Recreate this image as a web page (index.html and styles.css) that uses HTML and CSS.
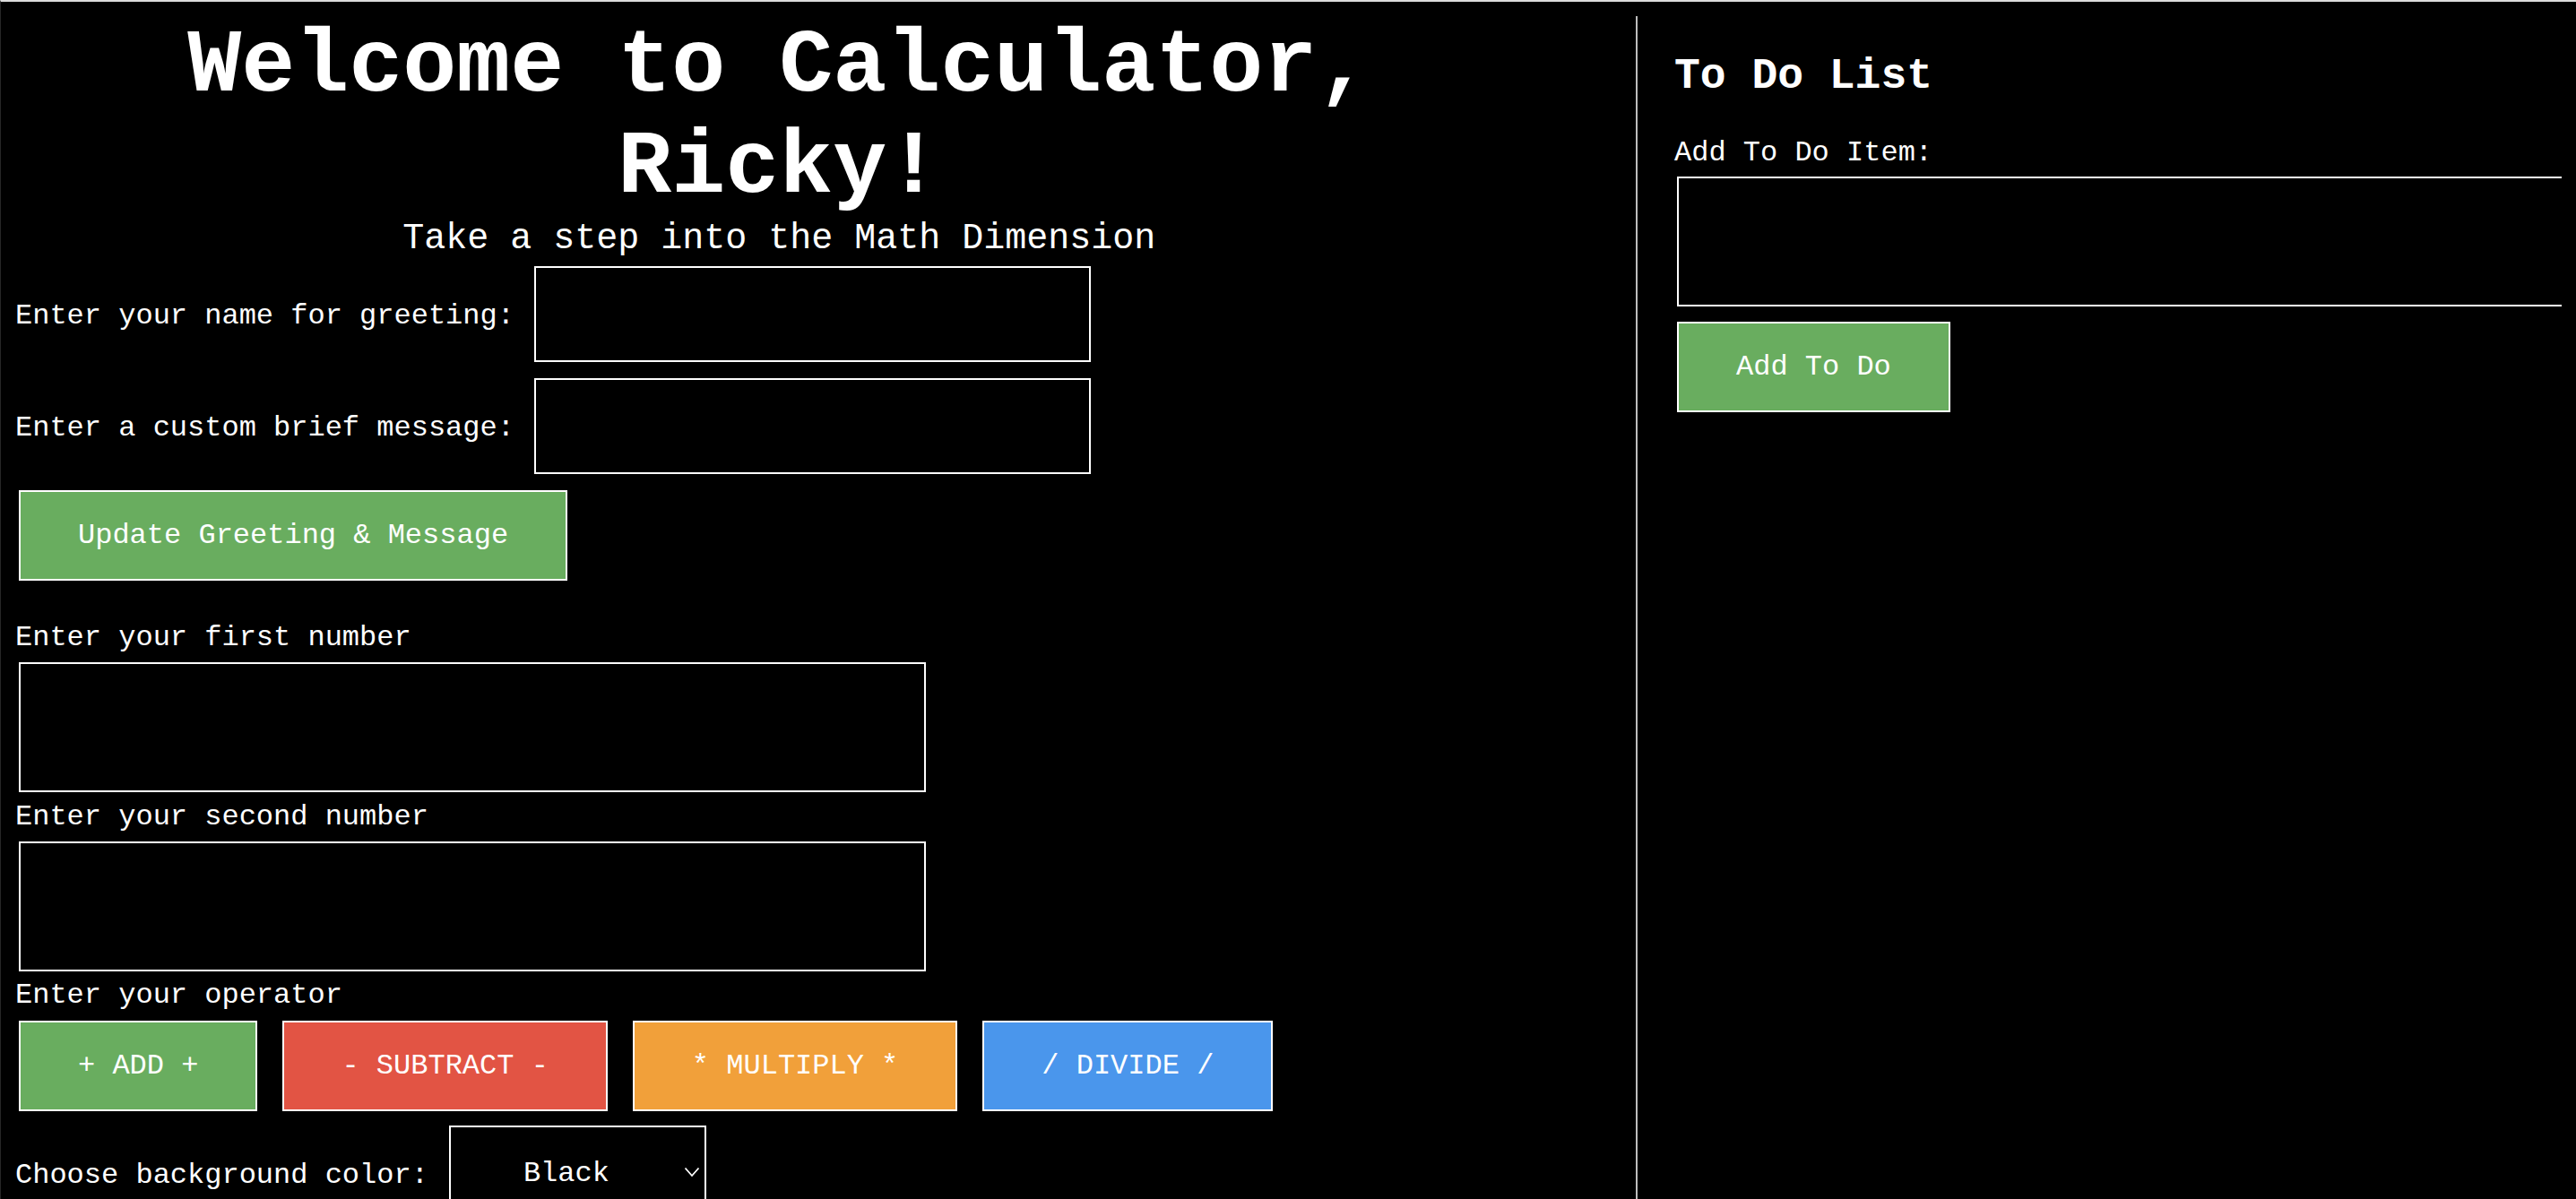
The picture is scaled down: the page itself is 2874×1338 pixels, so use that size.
FILE: index.html
```html
<!DOCTYPE html>
<html lang="en">
<head>
<meta charset="utf-8">
<title>Calculator</title>
<link rel="stylesheet" href="styles.css">
</head>
<body>
<div class="layout">
  <main class="calc">
    <h1 class="title">Welcome to Calculator, Ricky!</h1>
    <p class="subtitle">Take a step into the Math Dimension</p>
    <div class="row row-name">
      <label class="inline-label" for="name">Enter your name for greeting:</label>
      <input class="field field-short" id="name" type="text">
    </div>
    <div class="row">
      <label class="inline-label" for="msg">Enter a custom brief message:</label>
      <input class="field field-short" id="msg" type="text">
    </div>
    <button class="btn btn-green btn-update" type="button">Update Greeting &amp; Message</button>

    <label class="block-label label-first" for="num1">Enter your first number</label>
    <input class="field field-long" id="num1" type="text">
    <label class="block-label" for="num2">Enter your second number</label>
    <input class="field field-long" id="num2" type="text">
    <label class="block-label">Enter your operator</label>
    <div class="ops">
      <button class="btn btn-green" type="button">+ ADD +</button>
      <button class="btn btn-red" type="button">- SUBTRACT -</button>
      <button class="btn btn-orange" type="button">* MULTIPLY *</button>
      <button class="btn btn-blue" type="button">/ DIVIDE /</button>
    </div>
    <div class="row row-color">
      <label class="inline-label" for="bg">Choose background color:</label>
      <span class="select-wrap">
        <select class="color-select" id="bg">
          <option>Black</option>
          <option>White</option>
          <option>Blue</option>
        </select>
        <svg class="chevron" width="18" height="12" viewBox="0 0 18 12" aria-hidden="true"><path d="M1.5 1.5 L9 10 L16.5 1.5" fill="none" stroke="#ffffff" stroke-width="1.8"/></svg>
      </span>
    </div>
  </main>

  <aside class="todo">
    <h2 class="todo-title">To Do List</h2>
    <label class="todo-label" for="todo">Add To Do Item:</label>
    <div class="todo-input-wrap">
      <input class="field field-todo" id="todo" type="text">
    </div>
    <button class="btn btn-green btn-todo" type="button">Add To Do</button>
  </aside>
</div>
</body>
</html>
```

FILE: styles.css
```css
html {
  background: #000;
  border-top: 2px solid #dcdcdc;
  border-left: 1px solid #262626;
  overflow: hidden;
}

body {
  margin: 16px;
  background: #000;
  color: #fff;
  font-family: "Liberation Mono", "Courier New", monospace;
  font-size: 32px;
  line-height: normal;
}

.layout {
  display: flex;
  align-items: stretch;
}

/* ---------- left: calculator ---------- */
.calc {
  flex: 0 0 60%;
  display: flex;
  flex-direction: column;
  align-items: flex-start;
}

.title {
  align-self: stretch;
  margin: 0;
  font-size: 100px;
  font-weight: bold;
  line-height: normal;
  text-align: center;
}

.subtitle {
  align-self: stretch;
  margin: 0;
  font-size: 40px;
  text-align: center;
}

.row {
  display: flex;
  align-items: center;
  gap: 18px;
  margin-bottom: 10px;
}

.row-name {
  margin-top: 4px;
}

.row-color {
  gap: 19px;
  margin-bottom: 0;
}

.inline-label {
  margin-top: 4px;
  white-space: nowrap;
}

.block-label {
  display: block;
  margin: 4.4px 0 5.3px;
}

.label-first {
  margin-top: 41px;
}

.field {
  box-sizing: border-box;
  margin: 4px;
  padding: 0 10px;
  background: #000;
  color: #fff;
  border: 2px solid #fff;
  border-radius: 0;
  font: inherit;
  outline: none;
}

.field-short {
  width: 621px;
  height: 107px;
}

.field-long {
  width: 1012px;
  height: 145px;
}

.btn {
  margin: 4px;
  padding: 30px 64px;
  color: #fff;
  border: 2px solid #fff;
  border-radius: 0;
  font: inherit;
  line-height: normal;
  white-space: nowrap;
  cursor: pointer;
}

.btn-green { background: #69ad5f; }
.btn-red { background: #e25444; }
.btn-orange { background: #f1a03a; }
.btn-blue { background: #4a96ec; }

.ops {
  display: flex;
  gap: 20px;
  margin-bottom: 8px;
}

.select-wrap {
  position: relative;
  display: inline-block;
}

.color-select {
  -webkit-appearance: none;
  appearance: none;
  box-sizing: border-box;
  display: block;
  width: 287px;
  height: 107px;
  margin: 4px;
  padding: 0 0 0 81px;
  background: #000;
  color: #fff;
  border: 2px solid #fff;
  border-radius: 0;
  font: inherit;
  outline: none;
}

.chevron {
  position: absolute;
  right: 11px;
  top: 50px;
  pointer-events: none;
}

/* ---------- right: to do ---------- */
.todo {
  flex: 1 1 auto;
  min-width: 0;
  display: flex;
  flex-direction: column;
  align-items: flex-start;
  margin-left: 103.4px;
  padding-left: 41px;
  border-left: 2px solid #bdbdbd;
}

.todo-title {
  margin: 40px 0;
  font-size: 48px;
  font-weight: bold;
  line-height: normal;
}

.todo-label {
  display: block;
  margin-bottom: 4.3px;
}

.todo-input-wrap {
  display: flex;
  width: 1200px;
  min-width: 1200px;
}

.field-todo {
  flex: 0 0 1100px;
  width: 1100px;
  min-width: 1100px;
  height: 145px;
  margin-left: 3px;
}

.btn-todo {
  margin-top: 13px;
  margin-left: 3px;
}
```
